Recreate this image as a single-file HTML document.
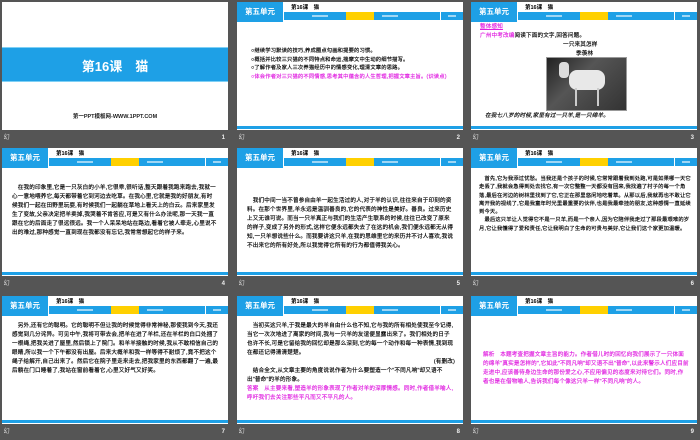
<!DOCTYPE html>
<html><head><meta charset="utf-8"><style>
*{margin:0;padding:0;box-sizing:border-box}
body{width:700px;height:438px;background:#555;position:relative;overflow:hidden;font-family:"Liberation Sans","Noto Sans CJK SC",sans-serif}
.s{position:absolute;width:226px;height:128px;background:#fff;overflow:hidden}
.s .bb{position:absolute;left:0;bottom:1px;width:100%;height:3px;background:#1ea0e6}
.u{position:absolute;left:0;top:0;width:46px;height:20px;background:#1ea0e6;color:#fff;font-size:7.5px;font-weight:bold;line-height:20px;text-align:center}
.ti{position:absolute;left:54px;top:1px;font-size:5.5px;font-weight:bold;color:#000}
.nav{position:absolute;left:47px;top:10px;width:179px;height:8px;background:#1ea0e6}
.nav .y{position:absolute;left:62px;top:0;width:28px;height:8px;background:#ffd000}
.nav .sp{position:absolute;left:156px;top:0;width:1px;height:8px;background:#fff}
.nav i{position:absolute;top:3px;height:2px;background:#9fd6f4}
.t{position:absolute;left:14px;width:200px;font-size:5.6px;line-height:9px;color:#000;letter-spacing:.15px;word-break:break-all;-webkit-text-stroke:.15px #000}
.m{color:#e020e0;-webkit-text-stroke:.15px #e020e0}
.lb{position:absolute;height:16px;width:226px;color:#ddd;font-size:6px;line-height:16px}
.lb b{position:absolute;right:3px;font-weight:bold;color:#eee}
</style></head><body>

<div class="s" style="left:2px;top:2px">
 <div style="position:absolute;left:0;top:45px;width:226px;height:35px;background:#1ea0e6;border-top:1px solid #7fd0f5;border-bottom:1px solid #7fd0f5"></div>
 <div style="position:absolute;left:0;top:54px;width:226px;text-align:center;color:#fff;font-size:13px;font-weight:bold">第16课　猫</div>
 <div style="position:absolute;left:0;top:110px;width:226px;text-align:center;font-size:5.5px;font-weight:bold;color:#222">第一PPT模板网-WWW.1PPT.COM</div>
</div>
<div class="lb" style="left:2px;top:130px">&nbsp;幻<b>1</b></div>

<div class="s" style="left:237px;top:2px">
 <div class="u">第五单元</div><div class="ti">第16课　猫</div><div class="nav"><i style="left:28px;width:16px"></i><div class="y"></div><i style="left:98px;width:16px"></i><div class="sp"></div><i style="left:164px;width:8px"></i></div>
 <div class="t" style="top:45px;left:14px;line-height:8.5px;font-size:5.3px">○继续学习默读的技巧,养成圈点勾画和提要的习惯。<br>○概括并比较三只猫的不同特点和命运,揣摩文中生动的细节描写。<br>○了解作者及家人三次养猫经历中的情感变化,理清文章的思路。<br><span class="m">○体会作者对三只猫的不同情感,思考其中蕴含的人生哲理,把握文章主旨。(识读点)</span></div>
 <div class="bb"></div>
</div>
<div class="lb" style="left:237px;top:130px">&nbsp;幻<b>2</b></div>

<div class="s" style="left:471px;top:2px">
 <div class="u">第五单元</div><div class="ti">第16课　猫</div><div class="nav"><i style="left:28px;width:16px"></i><div class="y"></div><i style="left:98px;width:16px"></i><div class="sp"></div><i style="left:164px;width:8px"></i></div>
 <div class="t m" style="top:21px;left:9px;text-decoration:underline">整体感知</div>
 <div class="t" style="top:30px;left:9px"><span class="m">广州中考改编</span>阅读下面的文字,回答问题。</div>
 <div class="t" style="top:39px;left:92px">一只来其怎样</div>
 <div class="t" style="top:48px;left:105px">季羡林</div>
 <div style="position:absolute;left:75px;top:55px;width:81px;height:54px;background:linear-gradient(135deg,#222,#555 40%,#333);border:1px solid #999">
  <div style="position:absolute;left:22px;top:12px;width:36px;height:20px;background:#e8e8e8;border-radius:8px"></div>
  <div style="position:absolute;left:12px;top:4px;width:10px;height:16px;background:#ddd;border-radius:4px"></div>
  <div style="position:absolute;left:28px;top:30px;width:2px;height:18px;background:#ccc"></div>
  <div style="position:absolute;left:50px;top:30px;width:2px;height:18px;background:#ccc"></div>
 </div>
 <div class="t" style="top:110px;left:14px;font-style:italic">在我七八岁的时候,家里有过一只羊,是一只绵羊。</div>
 <div class="bb"></div>
</div>
<div class="lb" style="left:471px;top:130px">&nbsp;幻<b>3</b></div>

<div class="s" style="left:2px;top:148px">
 <div class="u">第五单元</div><div class="ti">第16课　猫</div><div class="nav"><i style="left:28px;width:16px"></i><div class="y"></div><i style="left:98px;width:16px"></i><div class="sp"></div><i style="left:164px;width:8px"></i></div>
 <div class="t" style="top:36px;left:10px;width:206px">　在我的印象里,它是一只灰白的小羊,它很乖,很听话,整天跟着我跑来跑去,我就一心一意地喂养它,每天都带着它到河边去吃草。在我心里,它就是我的好朋友,有时候我们一起在田野里玩耍,有时候我们一起躺在草地上看天上的白云。后来家里发生了变故,父亲决定把羊卖掉,我哭着不肯答应,可是又有什么办法呢,那一天我一直跟在它的后面走了很远很远。我一个人呆呆地站在路边,看着它被人牵走,心里说不出的难过,那种感觉一直到现在我都没有忘记,我常常想起它的样子来。</div>
 <div class="bb"></div>
</div>
<div class="lb" style="left:2px;top:276px">&nbsp;幻<b>4</b></div>

<div class="s" style="left:237px;top:148px">
 <div class="u">第五单元</div><div class="ti">第16课　猫</div><div class="nav"><i style="left:28px;width:16px"></i><div class="y"></div><i style="left:98px;width:16px"></i><div class="sp"></div><i style="left:164px;width:8px"></i></div>
 <div class="t" style="top:49px;left:10px;width:208px">　我们中间一当不曾参自由羊一起生活过的人,对于羊的认识,往往来自于印刻的资料。在那个世界里,羊永远是温驯善良的,它的代表的神性是美好。善良。过来历史上又无谁可说。而当一只羊真正与我们的生活产生联系的时候,往往已改变了原来的样子,变成了另外的形式,这样它便永远都失去了在这的机会,我们便永远都无从得知,一只羊想说些什么。而我要讲这只羊,在我的思维里它的来历并不讨人喜欢,我说不出来它的所有好处,所以我觉得它所有的行为都值得我关心。</div>
 <div class="bb"></div>
</div>
<div class="lb" style="left:237px;top:276px">&nbsp;幻<b>5</b></div>

<div class="s" style="left:471px;top:148px">
 <div class="u">第五单元</div><div class="ti">第16课　猫</div><div class="nav"><i style="left:28px;width:16px"></i><div class="y"></div><i style="left:98px;width:16px"></i><div class="sp"></div><i style="left:164px;width:8px"></i></div>
 <div class="t" style="top:27px;left:8px;width:212px;font-size:5.3px;line-height:8.3px">　首先,它为我添过忧愁。当我还是个孩子的时候,它常常跟着我到处跑,可是如果哪一天它走丢了,我就会急得到处去找它,有一次它整整一天都没有回来,我找遍了村子的每一个角落,最后在河边的树林里找到了它,它正在那里悠闲地吃着草。从那以后,我就再也不敢让它离开我的视线了,它是我童年时光里最重要的伙伴,也是我最牵挂的朋友,这种感情一直延续到今天。<br>　最后这只羊让人觉得它不是一只羊,而是一个亲人,因为它陪伴我走过了那段最艰难的岁月,它让我懂得了爱和责任,它让我明白了生命的可贵与美好,它让我们这个家更加温暖。</div>
 <div class="bb"></div>
</div>
<div class="lb" style="left:471px;top:276px">&nbsp;幻<b>6</b></div>

<div class="s" style="left:2px;top:296px">
 <div class="u">第五单元</div><div class="ti">第16课　猫</div><div class="nav"><i style="left:28px;width:16px"></i><div class="y"></div><i style="left:98px;width:16px"></i><div class="sp"></div><i style="left:164px;width:8px"></i></div>
 <div class="t" style="top:26px;left:10px;width:208px">　另外,还有它的聪明。它的聪明不但让我的时候觉得非常神秘,那使我到今天,我还感觉到几分诧异。可见中午,我将可带去会,把羊在进了羊栏,还在羊栏的白口处捆了一根绳,把我关进了屋里,然后锁上了院门。和羊羊接触的时候,我从不敢相信自己的眼睛,所以我一个下午都没有出屋。后来大概羊和我一样等得不耐烦了,竟不把这个绳子给解开,自己出来了。然后它在院子里走来走去,把我家里的东西都翻了一遍,最后躺在门口睡着了,我站在窗前看着它,心里又好气又好笑。</div>
 <div class="bb"></div>
</div>
<div class="lb" style="left:2px;top:424px">&nbsp;幻<b>7</b></div>

<div class="s" style="left:237px;top:296px">
 <div class="u">第五单元</div><div class="ti">第16课　猫</div><div class="nav"><i style="left:28px;width:16px"></i><div class="y"></div><i style="left:98px;width:16px"></i><div class="sp"></div><i style="left:164px;width:8px"></i></div>
 <div class="t" style="top:26px;left:10px;width:208px">　当初买这只羊,于我是最大的羊自由什么也不知,它与我的所有相处使我至今记得,当它一次次地进了离家的时间,我与一只羊的友谊便显露出来了。我们相处的日子也许不长,可是它留给我的回忆却是那么深刻,它的每一个动作和每一种表情,我到现在都还记得清清楚楚。<br>　<span style="float:right">(有删改)</span><br>　结合全文,从文章主要的角度说说作者为什么要塑造一个"不同凡响"却又语不出"普命"的羊的形象。<br><span class="m">答案　从主要来看,塑造羊的形象表现了作者对羊的深厚情感。同时,作者借羊喻人,呼吁我们去关注那些平凡而又不平凡的人。</span></div>
 <div class="bb"></div>
</div>
<div class="lb" style="left:237px;top:424px">&nbsp;幻<b>8</b></div>

<div class="s" style="left:471px;top:296px">
 <div class="u">第五单元</div><div class="ti">第16课　猫</div><div class="nav"><i style="left:28px;width:16px"></i><div class="y"></div><i style="left:98px;width:16px"></i><div class="sp"></div><i style="left:164px;width:8px"></i></div>
 <div class="t m" style="top:55px;left:12px;width:206px">解析　本题考查把握文章主旨的能力。作者借儿时的回忆向我们展示了一只体面的绵羊"真实是怎样的",它如此"不同凡响"却又语不出"普命",以此来警示人们应目前走进中,应该善待身边生命的那份爱之心,不应用偏见的态度来对待它们。同时,作者也是在借物喻人,告诉我们每个像这只羊一样"不同凡响"的人。</div>
 <div class="bb"></div>
</div>
<div class="lb" style="left:471px;top:424px">&nbsp;幻<b>9</b></div>

</body></html>
